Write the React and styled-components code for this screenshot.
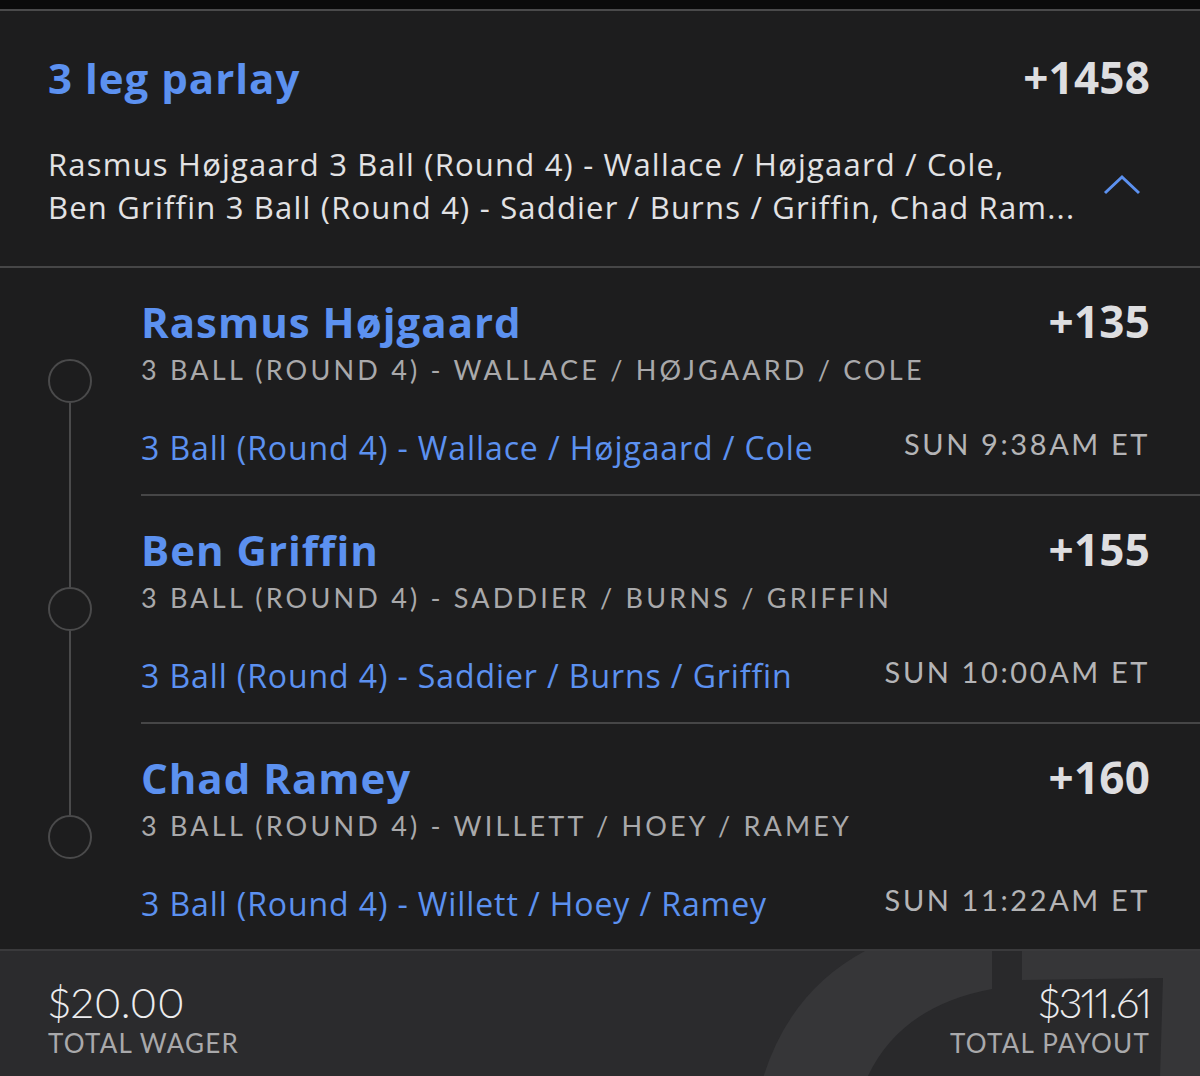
import React from "react";
import styled, { createGlobalStyle } from "styled-components";

const legs = [
  {
    name: "Rasmus Højgaard",
    odds: "+135",
    caption: "3 Ball (Round 4) - Wallace / Højgaard / Cole",
    time: "Sun 9:38AM ET",
  },
  {
    name: "Ben Griffin",
    odds: "+155",
    caption: "3 Ball (Round 4) - Saddier / Burns / Griffin",
    time: "Sun 10:00AM ET",
  },
  {
    name: "Chad Ramey",
    odds: "+160",
    caption: "3 Ball (Round 4) - Willett / Hoey / Ramey",
    time: "Sun 11:22AM ET",
  },
];

const GlobalStyle = createGlobalStyle`
  body {
    margin: 0;
    background: #0b0b0b;
    font-family: "Open Sans", Lato, sans-serif;
  }
`;

const Page = styled.div`
  width: 1200px;
  height: 1076px;
  overflow: hidden;
  padding-top: 9px;
  box-sizing: border-box;
  background: #0b0b0b;
  display: flex;
  flex-direction: column;
`;

const Card = styled.div`
  flex: 1;
  display: flex;
  flex-direction: column;
  background: #1d1d1e;
  border-top: 2px solid #4a4a4b;
`;

const Header = styled.div`
  padding: 30px 50px 0 48px;
  border-bottom: 2px solid #464647;
`;

const TitleRow = styled.div`
  display: flex;
  justify-content: space-between;
  align-items: baseline;
  height: 72px;
`;

const Title = styled.div`
  color: #5c91f0;
  font-size: 42px;
  font-weight: 700;
  line-height: 72px;
  letter-spacing: 1px;
`;

const Odds = styled.div`
  color: #dedee0;
  font-size: 44px;
  font-weight: 700;
  letter-spacing: 0.2px;
  line-height: ${(p) => p.$lh || "72px"};
`;

const Summary = styled.div`
  display: flex;
  align-items: center;
  justify-content: space-between;
  padding: 30px 0 37px;
`;

const SummaryText = styled.div`
  color: #e2e2e4;
  font-size: 31px;
  line-height: 43px;
  letter-spacing: 1.2px;
  width: 1030px;
  white-space: nowrap;
`;

const Chevron = styled.svg`
  width: 40px;
  height: 24px;
  margin-right: 8px;
  margin-top: -2px;
`;

const Legs = styled.div``;

const LegRow = styled.div`
  display: flex;
  height: ${(p) => (p.$last ? "225px" : "228px")};
`;

const Rail = styled.div`
  width: 141px;
  flex-shrink: 0;
  display: flex;
  flex-direction: column;
  align-items: center;
  padding-right: 1px;
  box-sizing: border-box;
`;

const RailLine = styled.div`
  width: 2px;
  background: ${(p) => (p.$off ? "transparent" : "#4a4a4b")};
  height: ${(p) => p.$h || "auto"};
  flex: ${(p) => (p.$grow ? 1 : "none")};
`;

const Dot = styled.div`
  width: 44px;
  height: 44px;
  border-radius: 50%;
  border: 2px solid #4a4a4b;
  box-sizing: border-box;
  flex-shrink: 0;
`;

const LegBody = styled.div`
  flex: 1;
  padding: 28px 50px 0 0;
  border-bottom: 2px solid ${(p) => (p.$last ? "transparent" : "#464647")};
  box-sizing: border-box;
`;

const NameRow = styled.div`
  display: flex;
  justify-content: space-between;
  align-items: baseline;
  height: 50px;
`;

const LegName = styled.div`
  color: #5c91f0;
  font-size: 42px;
  font-weight: 700;
  line-height: 50px;
  letter-spacing: 1px;
`;

const Caption = styled.div`
  font-family: Lato, sans-serif;
  color: #a9a9ab;
  font-size: 27px;
  line-height: 34px;
  text-transform: uppercase;
  letter-spacing: 3.2px;
  margin-top: 7px;
`;

const LinkRow = styled.div`
  display: flex;
  justify-content: space-between;
  align-items: flex-start;
  margin-top: 41px;
`;

const LegLink = styled.div`
  color: #5c91f0;
  font-size: 32px;
  line-height: 40px;
  letter-spacing: 0.9px;
`;

const Time = styled.div`
  font-family: Lato, sans-serif;
  color: #b4b4b6;
  font-size: 29px;
  line-height: 40px;
  text-transform: uppercase;
  letter-spacing: 2.6px;
  margin-top: -4px;
`;

const Footer = styled.div`
  position: relative;
  overflow: hidden;
  flex: 1;
  background: #2b2b2d;
  border-top: 2px solid #3a3a3c;
  display: flex;
  justify-content: space-between;
  padding: 28px 50px 0 48px;
  font-family: Lato, sans-serif;
`;

const Watermark = styled.svg`
  position: absolute;
  right: 0;
  top: 0;
  width: 500px;
  height: 127px;
`;

const Stat = styled.div`
  position: relative;
  display: flex;
  flex-direction: column;
  align-items: ${(p) => (p.$right ? "flex-end" : "flex-start")};
`;

const Amount = styled.div`
  color: #ececee;
  font-size: 42px;
  font-weight: 300;
  line-height: 46px;
  font-variant-numeric: proportional-nums;
  letter-spacing: ${(p) => p.$ls || "0px"};
`;

const StatLabel = styled.div`
  color: #a9a9ab;
  font-size: 26px;
  line-height: 32px;
  text-transform: uppercase;
  letter-spacing: 1.2px;
  margin-top: 2px;
`;

const App = () => {
  return (
    <Page>
      <GlobalStyle />
      <Card>
        <Header>
          <TitleRow>
            <Title>3 leg parlay</Title>
            <Odds>+1458</Odds>
          </TitleRow>
          <Summary>
            <SummaryText>
              Rasmus Højgaard 3 Ball (Round 4) - Wallace / Højgaard / Cole,
              <br />
              Ben Griffin 3 Ball (Round 4) - Saddier / Burns / Griffin, Chad Ram...
            </SummaryText>
            <Chevron viewBox="0 0 40 24">
              <polyline
                points="3,20 20,4 37,20"
                fill="none"
                stroke="#5c91f0"
                strokeWidth="3"
              />
            </Chevron>
          </Summary>
        </Header>
        <Legs>
          {legs.map((leg, i) => {
            const last = i === legs.length - 1;
            return (
              <LegRow key={leg.name} $last={last}>
                <Rail>
                  <RailLine $h="91px" $off={i === 0} />
                  <Dot />
                  <RailLine $grow $off={last} />
                </Rail>
                <LegBody $last={last}>
                  <NameRow>
                    <LegName>{leg.name}</LegName>
                    <Odds $lh="50px">{leg.odds}</Odds>
                  </NameRow>
                  <Caption>{leg.caption}</Caption>
                  <LinkRow>
                    <LegLink>{leg.caption}</LegLink>
                    <Time>{leg.time}</Time>
                  </LinkRow>
                </LegBody>
              </LegRow>
            );
          })}
        </Legs>
        <Footer>
          <Watermark viewBox="0 0 500 127">
            <path d="M63 127 Q 90 40 165 0 L 500 0 L 500 127 Z" fill="#363638" />
            <path
              d="M167 127 Q 200 55 292 38 L 292 0 L 322 0 L 322 29 L 463 27 L 460 127 Z"
              fill="#29292b"
            />
          </Watermark>
          <Stat>
            <Amount>$20.00</Amount>
            <StatLabel>Total Wager</StatLabel>
          </Stat>
          <Stat $right>
            <Amount $ls="-2px">$311.61</Amount>
            <StatLabel>Total Payout</StatLabel>
          </Stat>
        </Footer>
      </Card>
    </Page>
  );
};

export default App;
